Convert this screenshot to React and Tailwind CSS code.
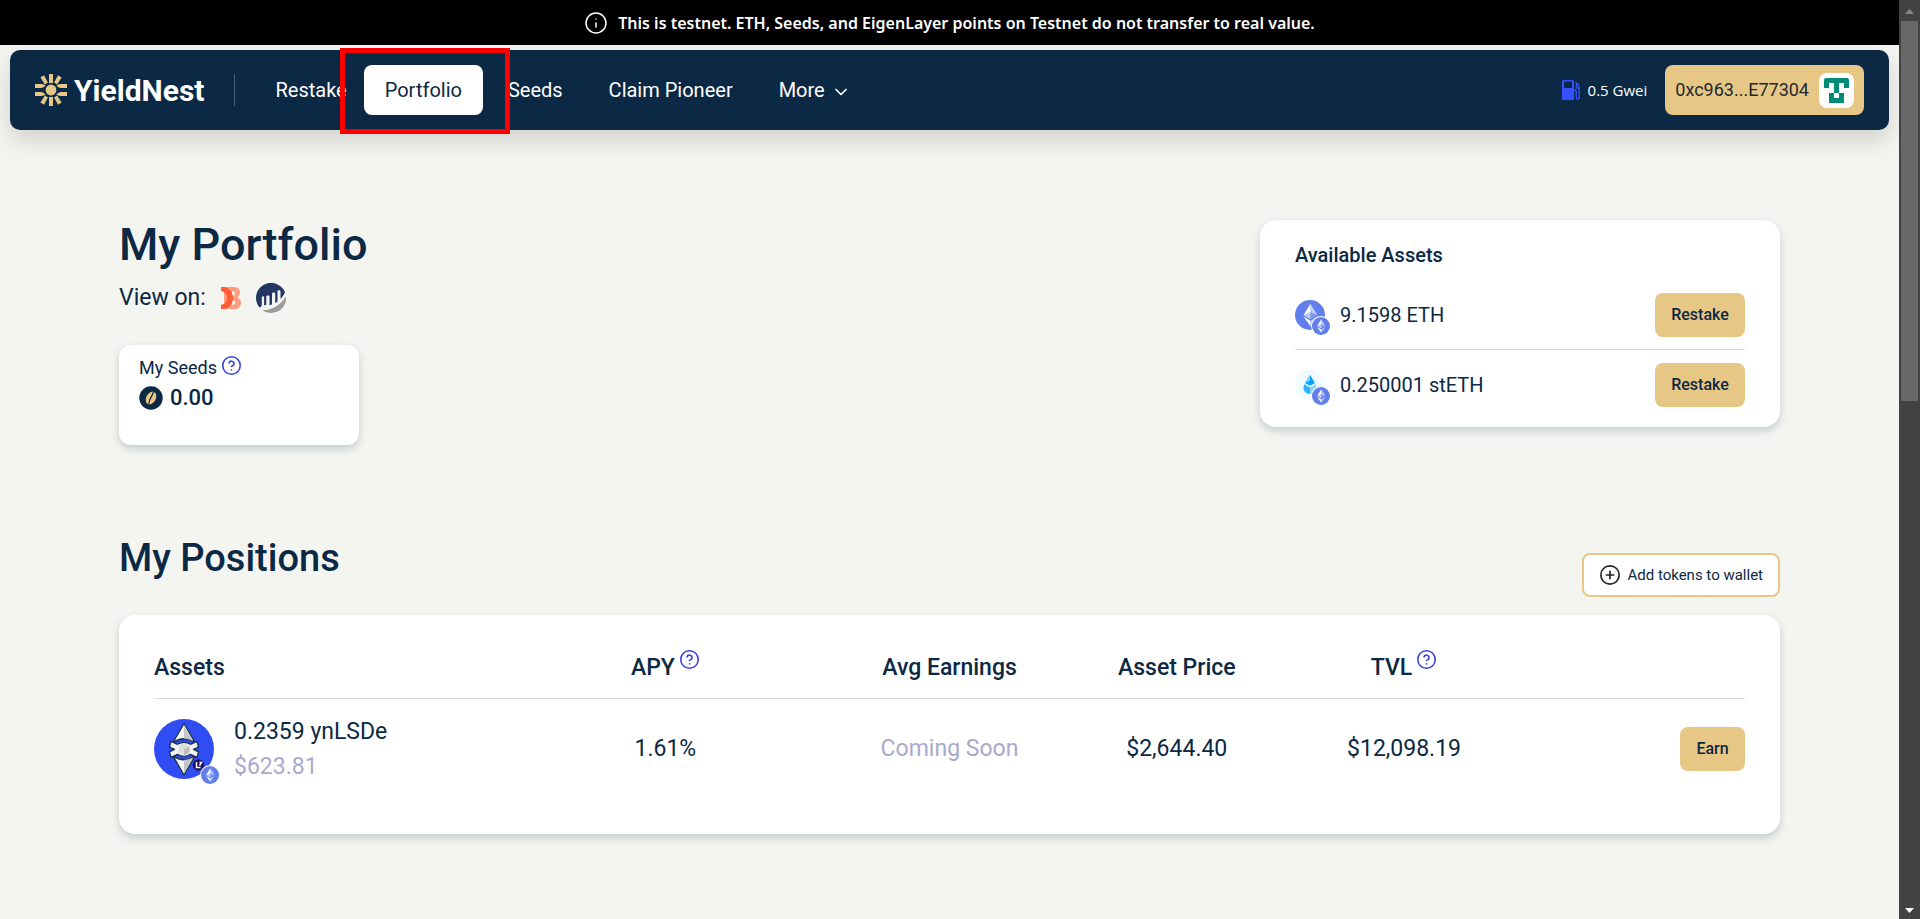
import React from "react";
import { CircleHelp, CirclePlus, Info, ChevronDown } from "lucide-react";

function Logo() {
  return (
    <svg viewBox="0 0 32 32" className="size-8 shrink-0" fill="#e6c786" aria-hidden="true">
      <circle cx="16" cy="16" r="5.4" />
      <path d="M14 0h4v9.2a8 8 0 0 0-4 0z" />
      <path d="M14 32h4v-9.2a8 8 0 0 1-4 0z" />
      <path d="M5.4 3.4 9 1.2l3.9 7.4-3 1.9z" />
      <path d="M26.6 3.4 23 1.2l-3.9 7.4 3 1.9z" />
      <path d="M5.4 28.6 9 30.8l3.9-7.4-3-1.9z" />
      <path d="M26.6 28.6 23 30.8l-3.9-7.4 3-1.9z" />
      <path d="M0 10h6.500c2 0 2.800.8 4.200 1.500C9.300 12.500 8 14 6 14H0z" />
      <path d="M32 10h-6.500c-2 0-2.800.8-4.200 1.500C22.700 12.500 24 14 26 14h6z" />
      <path d="M0 18h6c2 0 3.300 1.500 4.700 2.500C9.300 21.200 8.500 22 6.500 22H0z" />
      <path d="M32 18h-6c-2 0-3.300 1.500-4.700 2.500 1.400.7 2.200 1.500 4.200 1.500H32z" />
    </svg>
  );
}

function GasIcon() {
  return (
    <svg viewBox="0 0 20 20" className="size-5 shrink-0" aria-hidden="true">
      <path fill="#3451ff" fillRule="evenodd" d="M1.500 0h9A1.500 1.500 0 0 1 12 1.500V20H0V1.500A1.500 1.500 0 0 1 1.500 0zM2 1.500V8h8V1.500z" />
      <path fill="none" stroke="#3451ff" strokeWidth="1.400" d="M12 10h1.200a1 1 0 0 1 1 1v6.500a1.500 1.500 0 0 0 3 0V7.500c0-2-1.400-3.800-4-4.800M14.500 4v3.500l2.700 1.500" />
    </svg>
  );
}

function Avatar() {
  return (
    <svg viewBox="0 0 35 35" className="size-[35px] shrink-0 rounded-lg bg-white" fill="#008a78" aria-hidden="true">
      <path d="M7 5h21a2 2 0 0 1 2 2v8h-5v-5h-5v10h5v10H10V20h5V10h-5v5H5V7a2 2 0 0 1 2-2z" />
      <path fill="#fff" d="M15 20h5v5h-5z" />
    </svg>
  );
}

function EthIcon({ className }) {
  return (
    <svg viewBox="0 0 32 32" className={className} aria-hidden="true">
      <circle cx="16" cy="16" r="16" fill="#627eea" />
      <g fill="#fff">
        <path fillOpacity=".6" d="M16.500 4v8.900l7.500 3.300z" />
        <path d="M16.500 4 9 16.200l7.500-3.300z" />
        <path fillOpacity=".6" d="M16.500 22v6L24 17.600z" />
        <path d="M16.500 28v-6L9 17.600z" />
        <path fillOpacity=".2" d="m16.500 20.600 7.500-4.400-7.500-3.300z" />
        <path fillOpacity=".6" d="m9 16.200 7.500 4.400v-7.700z" />
      </g>
    </svg>
  );
}

function StethIcon() {
  return (
    <svg viewBox="0 0 30 30" className="size-[30px]" aria-hidden="true">
      <circle cx="15" cy="15" r="15" fill="#f1fafe" />
      <path fill="#00a3ff" d="m15 5 5 8-5 2.800-5-2.800z" />
      <path fill="#7fd0ff" d="m15 5-5 8 5-2.200z" />
      <path fill="#2fb2ff" d="m9.200 14.200 5.800 3.300V24c-5 0-8-5-5.800-9.800z" />
      <path fill="#8ad5ff" d="M20.800 14.200 15 17.500V24c5 0 8-5 5.800-9.800z" />
    </svg>
  );
}

function YnIcon() {
  return (
    <svg viewBox="0 0 60 60" className="size-[60px]" aria-hidden="true">
      <circle cx="30" cy="30" r="30" fill="#2f4df2" />
      <g stroke="#1c3247" strokeWidth="1.300" strokeLinejoin="round" fill="#f4f4f4">
        <path d="M30 4.500 19 23.500q11-7.500 22 0z" />
        <path d="M30 56 19 37q11 7.500 22 0z" />
        <path d="m17 22.500 6.500 2.800q6.500-4 13 0l6.500-2.800 1.500 5.500-5 2.300 5 2.500-1.500 5.500-6.500-3q-6.500 4-13 0l-6.500 3-1.500-5.500 5-2.500-5-2.300z" />
      </g>
      <path fill="#c6c6c6" d="M30 6.500v13q4.500.2 9 2.500zM30 54V41q4.500-.2 9-2.500z" />
      <path fill="#dedede" d="m30 24 5.500 3v6.500L30 36.500l-5.500-3V27z" />
      <path fill="#bdbdbd" d="m30 30.300 5.500-3.300v6.500l-5.500 3z" />
      <circle cx="44.500" cy="46" r="5.700" fill="#1d1160" />
      <path fill="none" stroke="#fff" strokeWidth="1.500" d="M42.500 43v5.500h4M45.500 43.500h2l-2 3" />
    </svg>
  );
}

function DuneIcon() {
  return (
    <svg viewBox="0 0 20 22" className="h-[22px] w-5" aria-hidden="true">
      <path fill="#ff9d80" fillRule="evenodd" d="M3 0h10c4 0 6 2.500 6 5.500 0 2.300-1 4-2.500 5 2 1 3.500 2.800 3.500 5.500 0 3.500-2.500 6-6.500 6H3zm8 4v5c4 0 4-5 0-5zm0 9v5c4.500 0 4.500-5 0-5z" />
      <path fill="#ff5c35" d="M0 0h2c6 0 10 5 10 11S8 22 2 22H0v-4c4-1 6-3.500 6-7S4 5 0 4z" />
    </svg>
  );
}

function EtherscanIcon() {
  return (
    <svg viewBox="0 0 30 30" className="size-[30px]" aria-hidden="true">
      <path fill="#9b9b9b" d="M29.900 13.500C31 23 24 30 15 30c-3 0-6-1-8.500-2.800 10-.2 18-5 23.400-13.700z" />
      <path fill="#243663" d="M3.500 24.500A15 15 0 1 1 29 9.500c-1 2-2.500 4.500-4.500 6.500V8.500Q24.500 7 23 7t-1.500 1.500v10l-2.300 1.500V10.500Q19.200 9.500 18 9.500h-.8q-1.200 0-1.200 1.200v10.800l-2.500.8V13.500Q13.500 12.500 12.500 12.500H11.500q-1.200 0-1.200 1.200V22l-2.200.3V14.500Q8 13.300 7 13.300t-1.200 1.200V22c0 1-.8 2.200-2.300 2.500z" />
    </svg>
  );
}

function SeedIcon() {
  return (
    <svg viewBox="0 0 24 24" className="size-6" aria-hidden="true">
      <circle cx="12" cy="12" r="11.700" fill="#0b2844" />
      <ellipse cx="12" cy="12" rx="4.800" ry="6.800" transform="rotate(28 12 12)" fill="#e6c786" />
      <path d="M14.200 5.500c.5 4-4.300 5.500-4.400 13" stroke="#0b2844" strokeWidth="1.200" fill="none" />
    </svg>
  );
}

function TokenIcon({ children }) {
  return (
    <span className="relative block shrink-0">
      {children}
      <span className="absolute -right-[6px] -bottom-[6px] rounded-full bg-white p-px">
        <EthIcon className="size-[18px]" />
      </span>
    </span>
  );
}

const Help = () => <CircleHelp className="size-[21px] shrink-0 text-[#3b3fe0]" strokeWidth={1.8} />;

const assets = [
  { label: "9.1598 ETH", icon: <EthIcon className="size-[30px]" /> },
  { label: "0.250001 stETH", icon: <StethIcon /> },
];

export default function App() {
  return (
    <div className="flex h-screen overflow-hidden bg-[#f4f5f0] font-['Roboto','Liberation_Sans',sans-serif] text-[#0b2844]">
      <div className="min-w-0 flex-1">
        <div className="flex h-[45px] items-center justify-center gap-[10px] bg-black pt-px font-['Noto_Sans','Open_Sans',sans-serif] text-base font-semibold text-white">
          <Info className="size-6" strokeWidth={1.5} />
          <span>This is testnet. ETH, Seeds, and EigenLayer points on Testnet do not transfer to real value.</span>
        </div>
        <header className="mx-[10px] mt-[5px] flex h-20 items-center rounded-[10px] bg-[#0b2844] px-[25px] text-white shadow-[0_10px_25px_rgba(0,0,0,0.15)]">
          <a href="#" className="flex items-center gap-[7px]">
            <Logo />
            <span className="text-[30px] font-bold">YieldNest</span>
          </a>
          <div className="ml-[30px] h-8 w-px bg-[#486077]" />
          <nav className="ml-5 flex items-center text-xl">
            <a href="#" className="py-[10px] pr-[17px] pl-5">Restake</a>
            <div className="relative">
              <a href="#" className="block rounded-lg bg-white px-[21px] py-[11px] text-[#0b2844]">Portfolio</a>
              <div className="absolute -top-[17px] -right-[27px] -bottom-[19px] -left-6 border-[5px] border-[#ff0000]" />
            </div>
            <a href="#" className="ml-[5px] px-5">Seeds</a>
            <a href="#" className="ml-[6px] px-5">Claim Pioneer</a>
            <button type="button" className="ml-[6px] flex items-center gap-[6px] px-5">
              More <ChevronDown className="mt-1 size-5" />
            </button>
          </nav>
          <div className="ml-auto flex items-center gap-[18px]">
            <div className="flex items-center gap-[6px] font-['Open_Sans',sans-serif] text-[15px]">
              <GasIcon /> 0.5 Gwei
            </div>
            <button type="button" className="flex h-[50px] items-center gap-[10px] rounded-lg bg-[#e6c786] px-[10px] text-lg text-[#1f2a30]">
              0xc963...E77304 <Avatar />
            </button>
          </div>
        </header>
        <main className="mx-auto max-w-[1661px] pt-[90px]">
          <div className="flex items-start justify-between">
            <div>
              <h1 className="text-[45px] leading-[50px] font-medium">My Portfolio</h1>
              <div className="mt-[13px] flex h-[30px] items-center text-[23px]">
                View on:
                <a href="#" aria-label="Dune" className="ml-[15px]"><DuneIcon /></a>
                <a href="#" aria-label="Etherscan" className="ml-[15px]"><EtherscanIcon /></a>
              </div>
              <section className="mt-8 h-[100px] w-60 rounded-xl bg-white px-5 pt-[10px] shadow-[0_4px_8px_rgba(11,40,68,0.2)]">
                <div className="flex gap-1 text-lg leading-[26px]">My Seeds <Help /></div>
                <div className="mt-1 flex items-center gap-[7px] text-[22px] leading-[26px] font-medium"><SeedIcon /> 0.00</div>
              </section>
            </div>
            <section className="w-[520px] rounded-2xl bg-white px-[35px] pt-5 pb-5 shadow-[0_4px_8px_rgba(11,40,68,0.2)]">
              <h2 className="text-xl leading-[30px] font-medium">Available Assets</h2>
              <ul className="mt-[11px] divide-y divide-[#dcdcd4]">
                {assets.map((a) => (
                  <li key={a.label} className="flex items-center pt-3 pb-3 last:pt-[13px] last:pb-0">
                    <TokenIcon>{a.icon}</TokenIcon>
                    <span className="ml-[15px] text-xl">{a.label}</span>
                    <button type="button" className="ml-auto h-11 w-[90px] rounded-lg bg-[#e6c786] text-base font-medium">Restake</button>
                  </li>
                ))}
              </ul>
            </section>
          </div>
          <div className="mt-[88px] flex justify-between">
            <h2 className="text-[38px] leading-[50px] font-medium">My Positions</h2>
            <button type="button" className="mt-5 flex h-11 items-center gap-[6px] rounded-lg border-2 border-[#e6c786] bg-white px-[15px] text-[15px]">
              <CirclePlus className="size-[22px] text-[#222]" strokeWidth={1.8} /> Add tokens to wallet
            </button>
          </div>
          <section className="mt-[18px] rounded-2xl bg-white px-[35px] pt-5 pb-[34px] shadow-[0_4px_8px_rgba(11,40,68,0.2)]">
            <table className="w-full table-fixed text-center text-[23px]">
              <thead>
                <tr className="h-[63px] border-b border-[#e0dad4] *:pt-1 *:font-medium">
                  <th className="w-3/14 text-left">Assets</th>
                  <th className="w-3/14"><span className="flex justify-center gap-1">APY <span className="-mt-[2px]"><Help /></span></span></th>
                  <th>Avg Earnings</th>
                  <th>Asset Price</th>
                  <th><span className="flex justify-center gap-1">TVL <span className="-mt-[2px]"><Help /></span></span></th>
                  <th aria-label="Actions"></th>
                </tr>
              </thead>
              <tbody>
                <tr className="h-[102px]">
                  <td>
                    <div className="flex items-center gap-5 text-left">
                      <TokenIcon><YnIcon /></TokenIcon>
                      <div className="leading-[35px]">
                        <div>0.2359 ynLSDe</div>
                        <div className="text-[#a9a9cf]">$623.81</div>
                      </div>
                    </div>
                  </td>
                  <td>1.61%</td>
                  <td className="text-[#a9a9cf]">Coming Soon</td>
                  <td>$2,644.40</td>
                  <td>$12,098.19</td>
                  <td className="text-right"><button type="button" className="h-11 w-[65px] rounded-lg bg-[#e6c786] text-center align-middle text-base font-medium">Earn</button></td>
                </tr>
              </tbody>
            </table>
          </section>
        </main>
      </div>
      <div className="flex w-[21px] shrink-0 flex-col items-center bg-[#424242]" aria-hidden="true">
        <svg viewBox="0 0 21 21" className="h-[21px] w-full"><path fill="#868686" d="M6 14h9l-4.500-5z" /></svg>
        <div className="h-[380px] w-[17px] bg-[#686868]" />
        <svg viewBox="0 0 21 21" className="mt-auto h-[21px] w-full"><path fill="#fff" d="M6 10h9l-4.500 5z" /></svg>
      </div>
    </div>
  );
}
